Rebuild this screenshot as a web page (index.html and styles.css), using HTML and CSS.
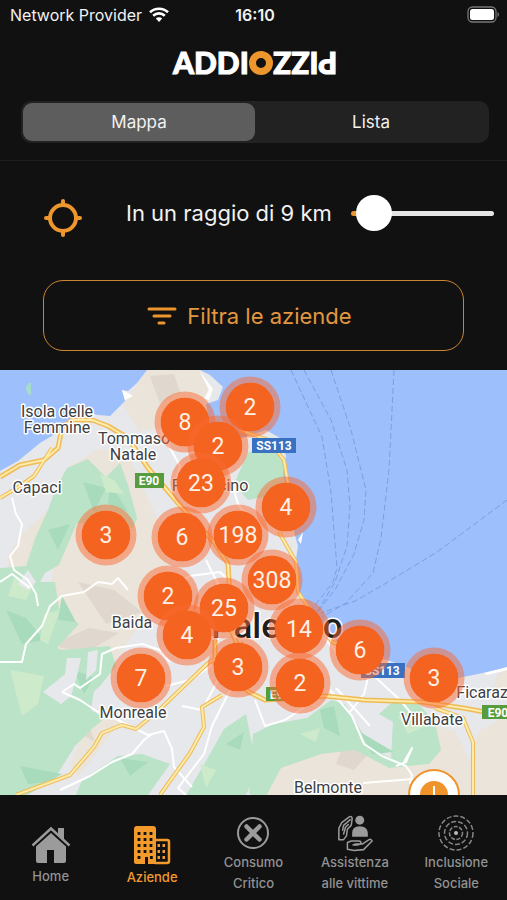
FILE: index.html
```
<!DOCTYPE html>
<html lang="it">
<head>
    <meta charset="UTF-8">
    <meta name="viewport" content="width=device-width, initial-scale=1.0">
    <title>Addiopizzo - Aziende</title>
    <link rel="stylesheet" href="styles.css">
</head>
<body>
    <!-- Status bar -->
    <div class="status-bar">
        <div class="carrier">
            <span>Network Provider</span>
            <svg width="20" height="15" viewBox="0 0 20 15" fill="none" stroke="#fff" stroke-width="2.6">
                <path d="M1 5.3a13 13 0 0 1 18 0"/>
                <path d="M4.2 8.7a8.4 8.4 0 0 1 11.6 0"/>
                <path d="M10 15l-3.2-3.4a4.6 4.6 0 0 1 6.4 0z" fill="#fff" stroke="none"/>
            </svg>
        </div>
        <div class="clock">16:10</div>
        <div class="battery">
            <svg width="33" height="17" viewBox="0 0 33 17">
                <rect x="1" y="1" width="28" height="15" rx="4.5" fill="none" stroke="#77777a" stroke-width="1.3"/>
                <rect x="3" y="3" width="24" height="11" rx="2.5" fill="#fff"/>
                <path d="M30.5 6v5q1.5-.8 1.5-2.5T30.5 6z" fill="#77777a"/>
            </svg>
        </div>
    </div>

    <header class="header">
        <h1 class="logo">
            <span>ADDI</span><span class="logo-ring"></span><span class="logo-flipped">PIZZ</span>
        </h1>
        <div class="segmented">
            <button class="segment active">Mappa</button>
            <button class="segment">Lista</button>
        </div>
    </header>

    <section class="filters">
        <div class="radius-row">
            <button class="locate" aria-label="Posizione attuale">
                <svg width="40" height="40" viewBox="0 0 40 40" fill="none" stroke="#ed962e" stroke-width="4" stroke-linecap="round">
                    <circle cx="20" cy="20" r="13"/>
                    <path d="M20 3v3M20 34v3M3 20h3M34 20h3"/>
                </svg>
            </button>
            <label for="radius">In un raggio di 9 km</label>
            <input class="slider" type="range" id="radius" min="0" max="200" value="9">
        </div>
        <button class="filter-button">
            <svg width="30" height="20" viewBox="0 0 30 20" stroke="#ed962e" stroke-width="3" stroke-linecap="round">
                <path d="M2 3h26M7 10h16M12 17h5"/>
            </svg>
            Filtra le aziende
        </button>
    </section>

    <main class="map">
        <svg class="map-tiles" viewBox="0 0 507 425" preserveAspectRatio="xMidYMid slice">
            <rect width="507" height="425" fill="#e7e8ec"/>

            <!-- Hills -->
            <g fill="#ebe4da">
                <path d="M147 0h53l13 20-6 12-14-4-20 26-34 8-16-28 12-16z"/>
                <path d="M70 96l30-18 30 10 14 32 16 34 10 60-26 34-30 44-40 24-24-10-6-60 12-60z"/>
                <path d="M8 186l16-24 24-22 6 40-22 30-24 6z"/>
                <path d="M86 355l10-8 24 4-20 28-22 28-8-12z"/>
                <path d="M253 425l10-26 30-14 64-10 34 12 36-32 28 6 12 24 12 40z"/>
                <path d="M507 345l-28 16-14 40-6 24h48zM507 300l-10 4-4 16 14 4z"/>
            </g>
            <path fill="#e0d8ce" d="M150 6l24-2 6 18-20 12zM78 212l36 8 28 22-36 12zM57 272l32-14 30 5-30 18-28-3zM67 358l20-6 8 20-14-8zM344 374l26 8-16 18-18-6z"/>

            <!-- Woods -->
            <g fill="#bbe3c8">
                <path d="M67 98l21-9 18 18 14-14 8 22 9 33-4 10-56-5-18 42-14 8-11 20-34-10v-15l26-2 10-30 12-26 8-22z"/>
                <path d="M0 212h55l4 26 20 16-22 24 16 6 34-4 6 8-16 12-6 40 14 8-12 10-18 18-20 32-27 17H0z"/>
                <path d="M60 280l50-4 6 20-16 20-18 16-20-2z"/>
                <path d="M82 410l36-24 24-2 28 10-22 31H76z"/>
                <path d="M246 344l6 30 10-4v8l-12 38-4 9h-60l20-34 18-32z"/>
                <path d="M253 364l20-10 34-6 24-18 14 4 12 20 14 24 20 10 2-36-14-8 18-16 20 4 18 20 6 28-12 14-40 4-34-18-34 4-40 14-16 30-16-4z"/>
                <path d="M248 82l22-4 14 10 2 24-16 14-22 4-14-16z"/>
            </g>
            <g fill="#a8dabc">
                <path d="M83 112l23 6-12 24zM110 112l18 30-20-8zM48 160l22-6-12 26zM6 240l20 8 18 22-22 4zM62 226l14 26-18-2zM74 300l20 8-10 16zM20 396l42 8-14 8-20 2zM120 388l28 4-18 14zM226 374l18-12-4 18zM320 340l14-4 6 30-16-8zM360 362l34 20-22 2z"/>
            </g>
            <g fill="#cdeacb">
                <path d="M14 208l20 6-8 16-18-4zM44 244l16-4-12 34-8-4zM10 300l34 6-6 28-16 12zM100 104l14 6 10 14-18-2zM200 394l16 6-10 18zM300 364l20-6-4 14zM398 346l22 0 6 10-18 8z"/>
            </g>
            <g fill="#e7e8ec">
                <path d="M43 322l22-18 2-16h14l-4 18-6 20-10 8zM88 282l10-2-2 20-10 10zM28 200l8 12-8 8-10-6z"/>
            </g>

            <!-- Sea -->
            <g fill="#9dbffb">
                <path d="M0 0h147l-10 13-9 8-6-1 3 11-15 15-12-1-16-4-22 20-20 12-22 18-18 10z"/>
                <path d="M200 0h307v298l-24 5-30 6-30-6-36-13-34-6-16-12-14-18-14-14-13-22-1-22 3-20-4-14 4-12-10-20-5-26 3-18-6-18-14-8-24 8-32-12-4-22 12-4 5-13-13-12z"/>
            </g>
            <path fill="#a6dccb" d="M31 13h-2q-6 5 0 12h2z"/>
            <path fill="#fff" d="M199 0l14 19-4 11-5-2 5-8zM122 20l3 10 8-4zM298 170l5-8-2 12zM484 303l23-6v3l-20 5z"/>

            <!-- Ferry routes -->
            <g fill="none" stroke="#7a9fe3" stroke-width="1" stroke-dasharray="6 3">
                <path d="M291 0l31 67 9 55 6 76-4 14-20 26"/>
                <path d="M304 0l27 50 16 50 3 36-3 40-12 36-18 30"/>
                <path d="M331 0l20 60 15 60-2 30-10 34-18 34-20 26"/>
                <path d="M394 0l-5 100-8 68-8 35-27 30-24 14"/>
                <path d="M507 130l-70 52-54 33-28 16-34 12"/>
            </g>

            <!-- Minor roads -->
            <g fill="none" stroke="#fff" stroke-width="2" stroke-linejoin="round">
                <path d="M12 128l4 16 6 10-4 22-8 10 4 14 14 10 8 14 2 12"/>
                <path d="M0 212l12-8 18 14M0 292h22l4-18 16-18 8-20 12-10 22-4 14-10 14 2 6-6 10 12"/>
                <path d="M62 322l12-8 6 4 20-14 2-20 14-6 26-4 18 6 10 12"/>
                <path d="M62 322l18 8 18 12 20 8 30 15 16-4 8 18 2 18 18 20"/>
                <path d="M60 420l30-14 22-14 20-8 12-14 8-6"/>
                <path d="M160 60l20 36-10 30M228 100l10 34 14 20-8 30M206 190l12 24 20 8"/>
                <path d="M150 230l40-24 30-4 20 20M166 316l24-6 18-12 10-8M182 336l20 4 16-30 16-16"/>
                <path d="M230 320l-18 36-8 28-26 34 8 7M255 330l10 26 20-6 24-16"/>
                <path d="M324 268l20 22 30 16 26 24 20 24M330 320l22 26 12 28 18 12 24 10 6 9-2 8h26M370 300l-6 24-14 18"/>
                <path d="M336 318l34 38M404 392l8-14-6 14-10 4M363 413l50-4"/>
            </g>

            <!-- Motorways, a dark casing below a light core -->
            <g fill="none" stroke="#efbb57" stroke-width="5" stroke-linejoin="round">
                <path d="M0 107l20-12 24-5 14-12 4-20 10-8h20l16 6 20 12 20 30 36 42 30 32 14 22 4 68 10 24"/>
                <path d="M215 270v24l34 28 16 8 60-4 40 4 58 2 40 6 44 8"/>
            </g>
            <g fill="none" stroke="#efbb57" stroke-width="4" stroke-linejoin="round">
                <path d="M0 128l20-12 14-10 18-28"/>
                <path d="M16 425l54-20 24-28 8-14 20-8 14 4 22-18 50-48 36-20"/>
                <path d="M160 425l30-42 14-26-2-20 20-12"/>
                <path d="M240 60l28 10 16 20 4 24-8 50 16 28 2 30 34 50 50 16"/>
                <path d="M435 338l28 10 10 24v53"/>
            </g>
            <g fill="none" stroke="#fdeba9" stroke-width="2" stroke-linejoin="round">
                <path d="M0 107l20-12 24-5 14-12 4-20 10-8h20l16 6 20 12 20 30 36 42 30 32 14 22 4 68 10 24"/>
                <path d="M215 270v24l34 28 16 8 60-4 40 4 58 2 40 6 44 8"/>
                <path d="M0 128l20-12 14-10 18-28"/>
                <path d="M16 425l54-20 24-28 8-14 20-8 14 4 22-18 50-48 36-20"/>
                <path d="M160 425l30-42 14-26-2-20 20-12"/>
                <path d="M240 60l28 10 16 20 4 24-8 50 16 28 2 30 34 50 50 16"/>
                <path d="M435 338l28 10 10 24v53"/>
            </g>

            <!-- Road shields -->
            <g class="shield">
                <rect x="135" y="103" width="29" height="15" fill="#579c3c"/>
                <text x="149" y="115">E90</text>
                <rect x="252" y="68" width="44" height="15" fill="#3871c1"/>
                <text x="274" y="80">SS113</text>
                <rect x="361" y="293" width="44" height="15" fill="#3871c1"/>
                <text x="382" y="305">SS113</text>
                <rect x="266" y="317" width="28" height="14" fill="#579c3c"/>
                <text x="280" y="329">E90</text>
                <rect x="482" y="335" width="30" height="14" fill="#579c3c"/>
                <text x="498" y="347">E90</text>
            </g>

            <!-- Place names -->
            <g class="place">
                <text x="57" y="47">Isola delle</text>
                <text x="57" y="63">Femmine</text>
                <text x="134" y="74">Tommaso</text>
                <text x="133" y="90">Natale</text>
                <text x="37" y="123">Capaci</text>
                <text x="210" y="121">Partinicino</text>
                <text x="132" y="258">Baida</text>
                <text x="133" y="348">Monreale</text>
                <text x="432" y="355">Villabate</text>
                <text x="488" y="328">Ficarazzi</text>
                <text x="328" y="423">Belmonte</text>
                <text class="city" x="277" y="268">Palermo</text>
            </g>

            <!-- Single business pin -->
            <circle cx="434" cy="425" r="25" fill="#fff" stroke="#f0932b" stroke-width="2"/>
            <circle cx="434" cy="425" r="14" fill="#f0932b"/>
            <path d="M434 416v12" stroke="#fff" stroke-width="2"/>
        </svg>

        <!-- Clusters, --x and --y are map coordinates -->
        <button class="cluster" style="--x:185;--y:52">8</button>
        <button class="cluster" style="--x:250;--y:37">2</button>
        <button class="cluster" style="--x:218;--y:76">2</button>
        <button class="cluster" style="--x:201;--y:113">23</button>
        <button class="cluster" style="--x:286;--y:137">4</button>
        <button class="cluster" style="--x:106;--y:165">3</button>
        <button class="cluster" style="--x:182;--y:167">6</button>
        <button class="cluster" style="--x:238;--y:165">198</button>
        <button class="cluster" style="--x:272;--y:210">308</button>
        <button class="cluster" style="--x:168;--y:226">2</button>
        <button class="cluster" style="--x:224;--y:238">25</button>
        <button class="cluster" style="--x:187;--y:265">4</button>
        <button class="cluster" style="--x:299;--y:259">14</button>
        <button class="cluster" style="--x:360;--y:280">6</button>
        <button class="cluster" style="--x:141;--y:308">7</button>
        <button class="cluster" style="--x:238;--y:297">3</button>
        <button class="cluster" style="--x:300;--y:313">2</button>
        <button class="cluster" style="--x:434;--y:308">3</button>
    </main>

    <nav class="tab-bar">
        <a class="tab short" href="#home">
            <svg width="40" height="38" viewBox="0 0 40 38" fill="#9b9b9b">
                <path d="M1.5 19.5L20 2.5l18.5 17" fill="none" stroke="#9b9b9b" stroke-width="2.4"/>
                <path d="M27 2h6v12.500l-6-5.500z"/>
                <path d="M20 7L5 20.500V35q0 2 2 2h9V24h7v13h10q2 0 2-2V20.500z"/>
            </svg>
            <span>Home</span>
        </a>
        <a class="tab short active" href="#aziende">
            <svg width="38" height="40" viewBox="0 0 38 40">
                <path d="M4 1h16q3 0 3 3v35h-8v-7h-3v7H3q-2 0-2-2V4q0-3 3-3z" fill="#f39a2d"/>
                <path d="M23 15h11q2 0 2 2v19q0 2-2 2H22" fill="none" stroke="#f39a2d" stroke-width="2.5"/>
                <path d="M4.600 8.500h15M4.600 14.500h15M4.600 20.500h15M4.600 26.500h15M4.600 32.500h3M17 32.500h3" stroke="#111" stroke-width="2.8" stroke-dasharray="2.8 3.2"/>
                <path d="M24.500 20.500h9M24.500 26.500h9M24.500 32.500h9" stroke="#f39a2d" stroke-width="2.8" stroke-dasharray="2.5 2.5"/>
            </svg>
            <span>Aziende</span>
        </a>
        <a class="tab" href="#consumo">
            <svg width="34" height="34" viewBox="0 0 34 34" fill="none" stroke="#9b9b9b">
                <circle cx="17" cy="17" r="15" stroke-width="2"/>
                <path d="M10.500 10.500l13 13M23.500 10.500l-13 13" stroke-width="4.5" stroke-linecap="round"/>
            </svg>
            <span>Consumo<br>Critico</span>
        </a>
        <a class="tab" href="#assistenza">
            <svg class="icon-tall" width="38" height="38" viewBox="0 0 38 40" fill="none" stroke="#9b9b9b" stroke-width="1.6" stroke-linejoin="round" stroke-linecap="round">
                <circle cx="24" cy="6.500" r="4.700" fill="#9b9b9b" stroke="none"/>
                <path d="M16 24v-4q0-7 8-7t8.500 7v4z" fill="#9b9b9b" stroke="none"/>
                <path d="M2 27V15l3-6 8-6q3-1 3 2l-1 7-4 4-1 7-3 4zM6 17l1-5 7-6M7 21l2-7 3-3"/>
                <path d="M11 30v7l7 1.500 10-1 9-9q-1-3-4-1l-6 4H19M11 30l4-1.500h8q3 0 2 3l-3 1h-5"/>
            </svg>
            <span>Assistenza<br>alle vittime</span>
        </a>
        <a class="tab" href="#inclusione">
            <svg class="icon-tall" width="38" height="38" viewBox="0 0 38 38" fill="none" stroke="#858585" stroke-width="1.5">
                <circle cx="19" cy="19" r="17" stroke-dasharray="5 2"/>
                <circle cx="19" cy="19" r="11.5" stroke-dasharray="5 2"/>
                <circle cx="19" cy="19" r="6.5" stroke-dasharray="4 1.5"/>
                <circle cx="19" cy="19" r="2" fill="#bbb" stroke="none"/>
            </svg>
            <span>Inclusione<br>Sociale</span>
        </a>
    </nav>
</body>
</html>
```

FILE: styles.css
```
* {
    box-sizing: border-box;
}

body {
    margin: 0;
    min-height: 100vh;
    display: flex;
    flex-direction: column;
    background-color: #111;
    color: #f2f2f2;
    font-family: Inter, sans-serif;
}

button {
    padding: 0;
    border: none;
    background: none;
    color: inherit;
    font-family: inherit;
    cursor: pointer;
}

svg {
    display: block;
    flex-shrink: 0;
}

/* Status bar */
.status-bar {
    display: grid;
    grid-template-columns: 1fr auto 1fr;
    align-items: center;
    height: 29px;
    padding: 0 7px 0 10px;
    font-size: 16px;
}

.carrier {
    display: flex;
    align-items: center;
    gap: 7px;
}

.clock {
    font-weight: 600;
}

.battery {
    justify-self: end;
}

/* Header */
.header {
    padding: 16px 18px 17px 21px;
    border-bottom: 1px solid #1e1e1e;
}

.logo {
    display: flex;
    justify-content: center;
    align-items: center;
    height: 36px;
    margin: 0 0 20px;
    color: #fff;
    font-family: Lato, sans-serif;
    font-size: 30px;
    font-weight: 900;
    line-height: 34px;
    -webkit-text-stroke: 1px #fff;
}

.logo span {
    height: 36px;
}

.logo .logo-ring {
    width: 24px;
    height: 24px;
    border: 7px solid #ed962e;
    border-radius: 50%;
}

.logo-flipped {
    transform: rotate(180deg);
}

.segmented {
    display: flex;
    height: 42px;
    padding: 2px;
    border-radius: 10px;
    background-color: #222;
}

.segment {
    flex: 1;
    border-radius: 9px;
    font-size: 17px;
}

.segment.active {
    background-color: #5d5d5d;
}

/* Radius and filter */
.filters {
    padding: 32px 13px 19px 43px;
}

.radius-row {
    display: flex;
    align-items: center;
    height: 40px;
    font-size: 22px;
}

.radius-row label {
    flex-shrink: 0;
    margin: 0 19px 0 43px;
}

.locate {
    margin-top: 10px;
}

.slider {
    flex: 1;
    min-width: 0;
    height: 36px;
    margin: 0;
    appearance: none;
    background: none;
}

.slider::-webkit-slider-runnable-track {
    height: 5px;
    border-radius: 3px;
    background: linear-gradient(to right, #ed962e 12%, #e5e5e5 12%);
}

.slider::-webkit-slider-thumb {
    appearance: none;
    width: 36px;
    height: 36px;
    margin-top: -16px;
    border-radius: 50%;
    background-color: #fff;
}

.filter-button {
    display: flex;
    justify-content: center;
    align-items: center;
    gap: 10px;
    width: calc(100% - 30px);
    height: 71px;
    margin-top: 47px;
    padding-right: 8px;
    border: 1px solid #ca8434;
    border-radius: 20px;
    color: #e3973f;
    font-size: 22px;
}

/* Map */
.map {
    position: relative;
    flex: 1;
    min-height: 425px;
    overflow: hidden;
    font-family: Roboto, sans-serif;
}

.map-tiles {
    position: absolute;
    width: 100%;
    height: 100%;
}

.place {
    fill: #3c4043;
    stroke: #fff;
    stroke-width: 3px;
    stroke-linejoin: round;
    paint-order: stroke;
    font-size: 16px;
    text-anchor: middle;
}

.place .city {
    fill: #1d1e20;
    font-size: 35px;
    font-weight: 500;
}

.shield {
    fill: #fff;
    font-size: 12px;
    font-weight: 700;
    text-anchor: middle;
}

.cluster {
    position: absolute;
    left: calc(var(--x) * 100% / 507);
    top: calc(var(--y) * 100% / 425);
    width: 61px;
    height: 61px;
    border: 6px solid rgba(250, 105, 50, 0.5);
    border-radius: 50%;
    background-color: #f46320;
    background-clip: padding-box;
    color: #fff0e5;
    font-size: 23px;
    transform: translate(-50%, -50%);
}

/* Tab bar */
.tab-bar {
    display: grid;
    grid-template-columns: repeat(5, 1fr);
    height: 105px;
}

.tab {
    display: flex;
    flex-direction: column;
    justify-content: center;
    align-items: center;
    gap: 2px;
    padding-top: 14px;
    color: #929292;
    font-size: 13px;
    font-weight: 500;
    line-height: 21px;
    text-align: center;
    text-decoration: none;
    white-space: nowrap;
}

.tab.short {
    padding-top: 18px;
}

.tab .icon-tall {
    margin: -2px 0;
}

.tab.active {
    color: #f39a2d;
}
```
